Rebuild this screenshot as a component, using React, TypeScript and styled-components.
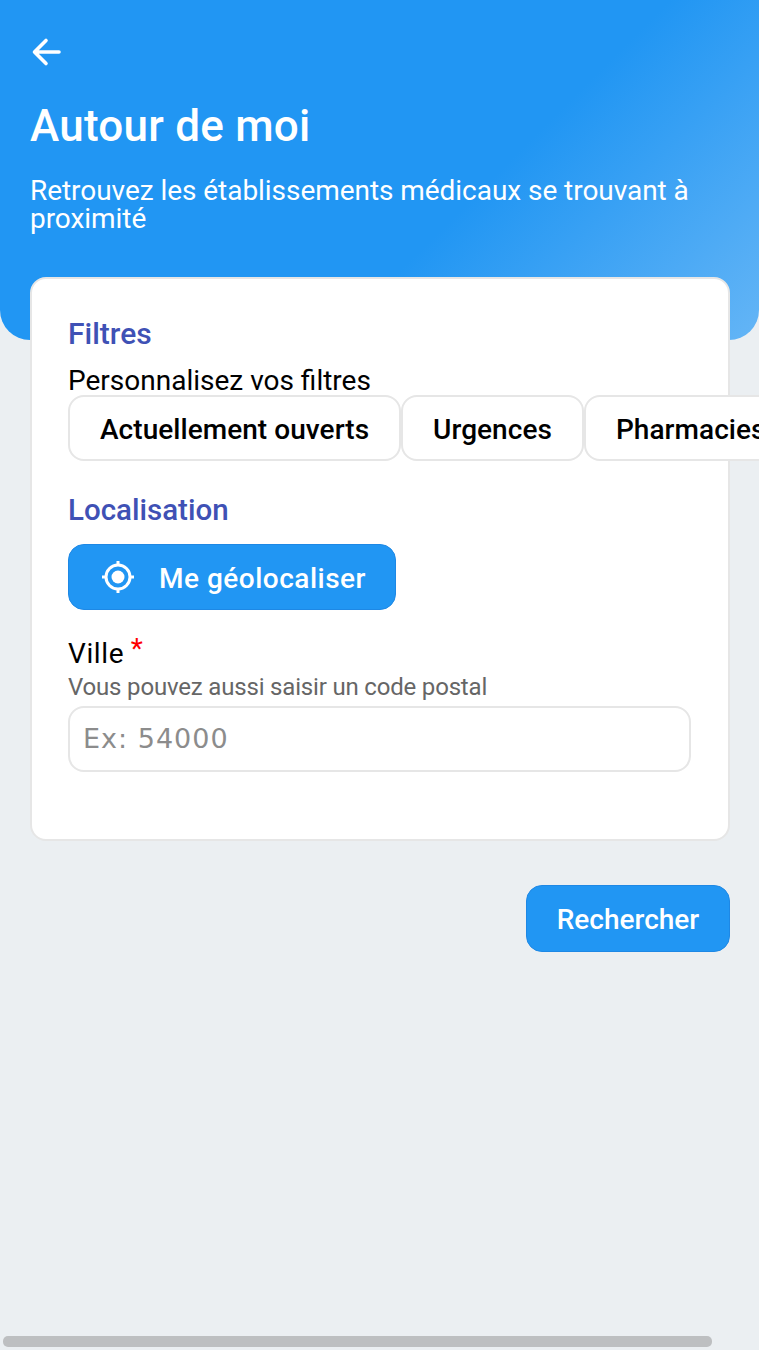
import React from "react";
import styled, { createGlobalStyle } from "styled-components";

const GlobalStyle = createGlobalStyle`
  html, body {
    margin: 0;
    padding: 0;
    width: 759px;
    height: 1350px;
    overflow: hidden;
    background: #ebeff2;
    font-family: Roboto, "Liberation Sans", sans-serif;
  }
  * { box-sizing: border-box; }
`;

const filters = ["Actuellement ouverts", "Urgences", "Pharmacies"];

const App: React.FC = () => {
  return (
    <>
      <GlobalStyle />
      <Screen>
        <Header>
          <BackButton aria-label="Retour">
            <svg width="32" height="32" viewBox="0 0 32 32" fill="none">
              <path
                d="M29 16H5M16 4.5 4.5 16 16 27.5"
                stroke="#fff"
                strokeWidth="3.6"
                strokeLinecap="round"
                strokeLinejoin="round"
              />
            </svg>
          </BackButton>
          <Title>Autour de moi</Title>
          <Subtitle>Retrouvez les établissements médicaux se trouvant à proximité</Subtitle>
        </Header>

        <Card>
          <SectionTitle>Filtres</SectionTitle>
          <FilterHint>Personnalisez vos filtres</FilterHint>
          <ChipRow>
            {filters.map((f) => (
              <Chip key={f}>{f}</Chip>
            ))}
          </ChipRow>

          <LocationTitle>Localisation</LocationTitle>
          <GeoButton>
            <svg width="34" height="34" viewBox="0 0 34 34" fill="none">
              <circle cx="17" cy="17" r="12" stroke="#fff" strokeWidth="3" />
              <circle cx="17" cy="17" r="6.5" fill="#fff" />
              <path d="M17 1v4M17 29v4M1 17h4M29 17h4" stroke="#fff" strokeWidth="3" />
            </svg>
            <GeoLabel>Me géolocaliser</GeoLabel>
          </GeoButton>

          <FieldLabel>
            Ville <Required>*</Required>
          </FieldLabel>
          <FieldHint>Vous pouvez aussi saisir un code postal</FieldHint>
          <CityInput placeholder="Ex: 54000" />
        </Card>

        <Actions>
          <SearchButton>Rechercher</SearchButton>
        </Actions>

        <ScrollThumb />
      </Screen>
    </>
  );
};

export default App;

const Screen = styled.div`
  position: relative;
  width: 759px;
  height: 1350px;
  overflow: hidden;
  background: #ebeff2;
`;

const Header = styled.header`
  height: 340px;
  padding: 36px 30px 0;
  background: linear-gradient(135deg, #2196f3 0%, #2196f3 61%, #64b5f6 100%);
  border-radius: 0 0 30px 30px;
`;

const BackButton = styled.button`
  display: block;
  width: 32px;
  height: 32px;
  padding: 0;
  border: 0;
  background: none;
`;

const Title = styled.h1`
  margin: 30px 0 0;
  font-size: 44px;
  line-height: 56px;
  font-weight: 500;
  letter-spacing: 0.25px;
  color: #fff;
`;

const Subtitle = styled.p`
  margin: 23px 0 0;
  font-size: 28px;
  line-height: 28px;
  font-weight: 400;
  letter-spacing: -0.05px;
  color: #fff;
`;

const Card = styled.section`
  margin: -63px 29px 0 30px;
  height: 564px;
  padding: 36px 37px 0 36px;
  background: #fff;
  border: 2px solid #e6e6e6;
  border-radius: 16px;
`;

const SectionTitle = styled.h2`
  margin: 0;
  font-size: 30px;
  line-height: 38px;
  font-weight: 500;
  color: #3f51b5;
`;

const FilterHint = styled.p`
  margin: 13px 0 0;
  font-size: 28px;
  line-height: 29px;
  color: #000;
`;

const ChipRow = styled.div`
  display: flex;
  width: max-content;
`;

const Chip = styled.div`
  display: flex;
  align-items: center;
  height: 66px;
  padding: 3px 30px 0;
  background: #fff;
  border: 2px solid #e6e6e6;
  border-radius: 16px;
  font-size: 28px;
  font-weight: 500;
  letter-spacing: 0.05px;
  color: #000;
`;

const LocationTitle = styled(SectionTitle)`
  margin-top: 30px;
  font-size: 29.5px;
`;

const GeoButton = styled.button`
  display: flex;
  align-items: center;
  gap: 24px;
  width: 328px;
  height: 66px;
  margin-top: 15px;
  padding: 0 0 0 32px;
  background: #2196f3;
  border: 1px solid #1e88e5;
  border-radius: 16px;
  font-family: inherit;
  font-size: 28px;
  font-weight: 500;
  letter-spacing: 0.5px;
  color: #fff;
`;

const GeoLabel = styled.span`
  padding-top: 2px;
`;

const FieldLabel = styled.div`
  margin-top: 26px;
  font-size: 28px;
  line-height: 36px;
  letter-spacing: 0.6px;
  color: #000;
`;

const Required = styled.span`
  position: relative;
  top: -5px;
  left: -1px;
  font-size: 28px;
  line-height: 0;
  color: #f00;
`;

const FieldHint = styled.div`
  font-size: 24px;
  line-height: 30px;
  letter-spacing: -0.18px;
  color: #666;
`;

const CityInput = styled.input`
  display: block;
  width: 100%;
  height: 66px;
  margin-top: 4px;
  padding: 0 13px 2px;
  background: #fff;
  border: 2px solid #e6e6e6;
  border-radius: 16px;
  font-family: "DejaVu Sans", sans-serif;
  font-size: 27px;
  letter-spacing: 1px;
  outline: 0;

  &::placeholder {
    color: #8c8c8c;
  }
`;

const Actions = styled.div`
  display: flex;
  justify-content: flex-end;
  padding: 44px 29px 0 0;
`;

const SearchButton = styled.button`
  width: 204px;
  height: 67px;
  padding: 2px 0 0;
  background: #2196f3;
  border: 1px solid #1e88e5;
  border-radius: 16px;
  font-family: inherit;
  font-size: 28px;
  font-weight: 500;
  color: #fff;
`;

const ScrollThumb = styled.div`
  position: absolute;
  left: 3px;
  bottom: 3px;
  width: 709px;
  height: 11px;
  background: #bdbfc1;
  border-radius: 5px;
`;
